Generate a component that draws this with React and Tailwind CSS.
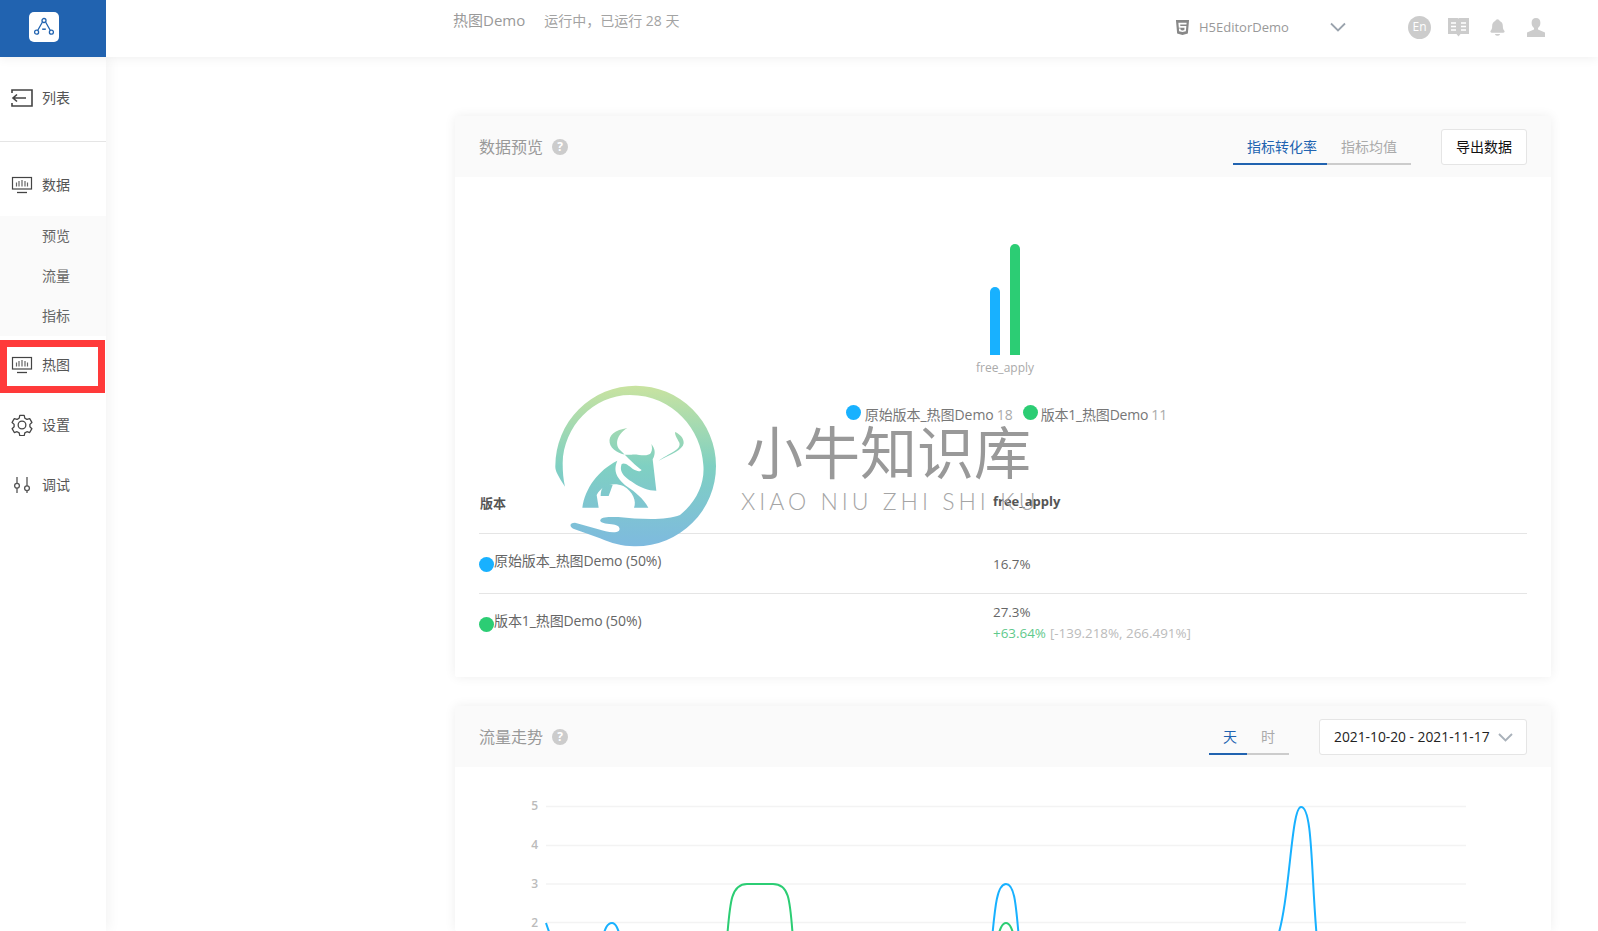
import React from "react";
import { SiHtml5 } from "react-icons/si";
import { IoNotifications } from "react-icons/io5";

const MonitorIcon = () => (
  <svg width="22" height="18" viewBox="0 0 22 18" fill="none" stroke="#444" strokeWidth="1.2">
    <rect x="1.500" y="1.500" width="19" height="11.500" />
    <path d="M11 4v6.500M8 5v5.500M14 5v5.500M5.500 6.500v4M16.500 6.500v4" stroke="#666" />
    <path d="M6 16.500h10" strokeWidth="1.300" />
  </svg>
);
const ListIcon = () => (
  <svg width="22" height="18" viewBox="0 0 22 18" fill="none" stroke="#444" strokeWidth="1.600">
    <path d="M1 4V1h20v16H1v-3" />
    <path d="M15 9H2M6 5.500L2 9l4 3.500" />
  </svg>
);
const GearIcon = () => (
  <svg width="22" height="22" viewBox="0 0 24 24" fill="none" stroke="#444" strokeWidth="1.400" strokeLinejoin="round">
    <path d="M9.600 1.600h4.800l.7 3 2.300 1.300 3-.9 2.400 4.200-2.200 2.100v2.600l2.200 2.100-2.400 4.200-3-.9-2.300 1.300-.7 3H9.600l-.7-3-2.300-1.300-3 .9-2.400-4.200 2.200-2.100v-2.600L1.200 9.200 3.600 5l3 .9 2.300-1.300z" />
    <circle cx="12" cy="12" r="4.200" />
  </svg>
);
const SliderIcon = () => (
  <svg width="18" height="18" viewBox="0 0 18 18" fill="none" stroke="#555" strokeWidth="1.300">
    <path d="M4 1v6.500M4 12v5M14 1v9M14 14.500V17" />
    <circle cx="4" cy="9.800" r="2.400" />
    <circle cx="14" cy="12.200" r="2.400" />
  </svg>
);

const NavItem = ({ icon, label, className = "" }) => (
  <div className={`flex items-center ${className}`}>
    <div className="flex w-[42px] justify-center pl-[2px]">
      <div className="flex w-[22px] justify-center">{icon}</div>
    </div>
    <span className="text-[14px] leading-[20px] text-[#555]">{label}</span>
  </div>
);
const SubItem = ({ label }) => (
  <div className="flex h-[40px] items-center pb-[2px] pl-[42px] text-[14px] text-[#666]">{label}</div>
);

const Help = () => (
  <span className="ml-[9px] flex h-[16px] w-[16px] items-center justify-center rounded-full bg-[#ccc] text-[12px] font-bold leading-none text-white">?</span>
);

const Tab = ({ label, active, last }) => (
  <div
    className={`-mb-[2px] flex h-[36px] items-center border-b-2 pl-[14px] text-[14px] ${last ? "pr-[14px]" : "pr-[10px]"} ${
      active ? "border-[#2163b0] text-[#2163b0]" : "border-[#ccc] text-[#aaa]"
    }`}
  >
    {label}
  </div>
);

const CardHeader = ({ title, children }) => (
  <div className="flex h-[61px] justify-between bg-[#fafafa] pl-[24px] pr-[24px] pt-[13px]">
    <div className="flex h-[36px] items-center text-[16px] text-[#999]">
      {title}
      <Help />
    </div>
    <div className="flex items-start">{children}</div>
  </div>
);

const Dot = ({ color, className = "" }) => (
  <span className={`inline-block h-[15px] w-[15px] shrink-0 rounded-full ${className}`} style={{ background: color }} />
);

const Logo = () => (
  <svg width="200" height="190" viewBox="0 0 600 570">
    <defs>
      <linearGradient id="lg" gradientUnits="userSpaceOnUse" x1="0" y1="47" x2="0" y2="530">
        <stop offset="0" stopColor="#c9e3a0" />
        <stop offset="0.5" stopColor="#7fd0c2" />
        <stop offset="1" stopColor="#7ebadf" />
      </linearGradient>
    </defs>
    <g fill="url(#lg)">
      <path d="M75 350C52 315 45 300 46 288A241 241 0 1 1 287 529C250 530 215 520 180 505L100 476C88 470 88 458 105 458L175 478C195 484 225 492 237 482C243 472 232 464 215 463C195 462 178 458 181 450C186 440 205 441 235 441C300 448 380 452 420 435C470 395 495 340 490 285C485 180 400 75 270 75C160 75 70 170 68 280C68 305 70 330 75 350Z" />
      <path d="M262 174C225 180 205 195 209 218C213 240 245 258 275 254C295 252 320 262 332 250C338 240 336 230 334 222C345 235 348 250 338 268L349 362C325 362 300 352 280 338C260 325 235 310 245 282C255 275 270 290 280 298C290 304 300 306 305 300C290 290 262 262 240 240C225 225 228 195 262 174Z" />
      <path d="M127 413C135 355 175 300 232 272C222 295 222 320 262 350C285 365 310 385 325 413H282C290 395 280 365 250 348C220 335 185 345 170 375L176 413Z" />
      <path d="M192 346C200 342 212 342 218 345L206 378H182C182 365 185 355 192 346Z" />
      <path d="M405 186C420 192 432 205 431 220C428 240 395 252 356 272C385 250 425 240 418 218C412 205 405 198 405 186Z" />
    </g>
  </svg>
);

export default function App() {
  return (
    <div
      className="relative h-[931px] w-[1598px] overflow-hidden bg-white"
      style={{ fontFamily: '"Open Sans", "Noto Sans CJK SC", sans-serif' }}
    >
      {/* top bar */}
      <div className="relative z-10 flex h-[57px] bg-white shadow-[0_2px_10px_rgba(0,0,0,0.06)]">
        <div className="w-[106px] bg-[#2163b0] pl-[29px] pt-[12px]">
          <div className="flex h-[30px] w-[30px] items-center justify-center rounded-[5px] bg-white">
            <svg width="20" height="20" viewBox="0 0 20 20" fill="none" stroke="#2163b0" strokeWidth="1.300">
              <path d="M8.300 5.200L3.800 13.300M11.700 5.200l4.500 8.100" />
              <circle cx="10" cy="3.500" r="2" />
              <circle cx="2.600" cy="15.200" r="2" />
              <circle cx="17.400" cy="15.200" r="2" />
              <path d="M8.200 12.200h3.600" strokeWidth="1.500" />
            </svg>
          </div>
        </div>
        <div className="relative flex flex-1">
          <div className="ml-[347px] flex h-[40px] items-center text-[14px] text-[#999]">
            <span className="text-[15px]">热图Demo</span>
            <span className="ml-[19px] text-[#a3a3a3]">运行中，已运行 28 天</span>
          </div>
          <div className="ml-auto flex h-[54px] items-center pr-[53px] text-[#aaa]">
            <SiHtml5 className="-ml-[1px] text-[15px] text-[#888]" />
            <span className="ml-[9px] w-[131px] pt-[1px] text-[13px] text-[#999]">H5EditorDemo</span>
            <svg width="16" height="10" viewBox="0 0 16 10" fill="none" stroke="#9aa3ad" strokeWidth="1.800">
              <path d="M1 1.500l7 7 7-7" />
            </svg>
            <span className="ml-[62px] flex h-[23px] w-[23px] items-center justify-center rounded-full bg-[#ccc] text-[12px] text-white">En</span>
            <svg className="ml-[17px]" width="21" height="19" viewBox="0 0 21 19">
              <path fill="#ccc" d="M0 0h9.500c.6 0 1 .3 1 .8 0-.5.4-.8 1-.8H21v16h-8.500l-2 2.500-2-2.500H0z" />
              <path stroke="#fff" strokeWidth="1.600" d="M3 5h5M3 8.500h5M13 5h5M13 8.500h5M3 12h5M13 12h5" />
            </svg>
            <IoNotifications className="ml-[19px] text-[19px] text-[#ccc]" />
            <svg className="ml-[20px]" width="18" height="19" viewBox="0 0 18 19">
              <path fill="#ccc" d="M9 0c2.800 0 4.400 2 4.400 4.800 0 2.400-1 4.200-2.400 5.200v1.500l7 3V19H0v-4.500l7-3V10C5.600 9 4.600 7.200 4.600 4.800 4.600 2 6.200 0 9 0z" />
            </svg>
          </div>
        </div>
      </div>

      <div className="flex h-[874px]">
        {/* sidebar */}
        <aside className="relative w-[106px] shrink-0 bg-white shadow-[3px_0_12px_rgba(0,0,0,0.05)]">
          <NavItem icon={<ListIcon />} label="列表" className="h-[84px] pb-[2px]" />
          <div className="h-px bg-[#e5e5e5]" />
          <NavItem icon={<MonitorIcon />} label="数据" className="h-[74px] pt-[11px]" />
          <div className="bg-[#fafafa]">
            <SubItem label="预览" />
            <SubItem label="流量" />
            <SubItem label="指标" />
          </div>
          <div className="mt-[4px] w-[105px] border-[7px] border-[#ff3a3a] bg-white">
            <NavItem icon={<MonitorIcon />} label="热图" className="-ml-[7px] h-[39px] pb-[3px]" />
          </div>
          <NavItem icon={<GearIcon />} label="设置" className="mt-[11px] h-[41px]" />
          <NavItem icon={<SliderIcon />} label="调试" className="mt-[19px] h-[41px]" />
        </aside>

        {/* main */}
        <main className="flex-1 pl-[349px] pr-[47px] pt-[59px]">
          <section className="h-[561px] rounded-[2px] bg-white shadow-[0_0_12px_rgba(0,0,0,0.07)]">
            <CardHeader title="数据预览">
              <div className="flex border-b-2 border-[#ccc]">
                <Tab label="指标转化率" active />
                <Tab label="指标均值" last />
              </div>
              <button className="ml-[30px] h-[36px] w-[86px] rounded-[3px] border border-[#e5e5e5] bg-white pb-[2px] text-[14px] text-[#111]">
                导出数据
              </button>
            </CardHeader>
            <div className="px-[24px]">
              <div className="flex flex-col items-center pl-[4px] pt-[67px]">
                <div className="flex h-[111px] items-end gap-[10px]">
                  <div className="h-[68px] w-[10px] rounded-t-[5px] bg-[#18b1ff]" />
                  <div className="h-[111px] w-[10px] rounded-t-[5px] bg-[#2ccd74]" />
                </div>
                <div className="mt-[5px] h-[16px] text-[12px] leading-[16px] text-[#aaa]">free_apply</div>
                <div className="mt-[28px] flex h-[20px] items-center pl-[3px] text-[14px] leading-[20px] text-[#777]">
                  <Dot color="#18b1ff" className="-mt-[3px] mr-[4px]" />
                  <span className="mt-[1px] tracking-[-0.05px]">原始版本_热图Demo</span>
                  <span className="ml-[3px] mt-[1px] text-[#aaa]">18</span>
                  <Dot color="#2ccd74" className="-mt-[3px] ml-[10px] mr-[3px]" />
                  <span className="mt-[1px] tracking-[-0.2px]">版本1_热图Demo</span>
                  <span className="ml-[3px] mt-[1px] text-[#aaa]">11</span>
                </div>
              </div>
              <div className="mt-[50px] flex h-[60px] items-center border-b border-[#e5e5e5] text-[13px] font-bold text-[#555]">
                <div className="w-[514px] pl-[1px]">版本</div>
                <div className="pb-[4px]">free_apply</div>
              </div>
              <div className="flex h-[60px] items-center border-b border-[#e5e5e5] text-[14px] text-[#666]">
                <div className="flex w-[514px] items-center">
                  <Dot color="#18b1ff" className="mt-[2px]" />
                  <span className="-mt-[6px] tracking-[-0.1px]">原始版本_热图Demo (50%)</span>
                </div>
                <div className="pt-[1px] text-[13.4px]">16.7%</div>
              </div>
              <div className="flex h-[60px] items-center text-[14px] text-[#666]">
                <div className="flex w-[514px] items-center">
                  <Dot color="#2ccd74" className="mt-[0px]" />
                  <span className="-mt-[8px] tracking-[-0.1px]">版本1_热图Demo (50%)</span>
                </div>
                <div className="-mt-[2px] text-[13.4px] leading-[21px]">
                  <div>27.3%</div>
                  <div>
                    <span className="text-[#5fc98c]">+63.64%</span>
                    <span className="ml-[4px] text-[#bbb]">[-139.218%, 266.491%]</span>
                  </div>
                </div>
              </div>
            </div>
          </section>

          <section className="mt-[29px] rounded-[2px] bg-white shadow-[0_0_12px_rgba(0,0,0,0.07)]">
            <CardHeader title="流量走势">
              <div className="flex border-b-2 border-[#ccc]">
                <Tab label="天" active />
                <Tab label="时" last />
              </div>
              <div className="ml-[30px] flex h-[36px] w-[208px] items-center justify-between rounded-[3px] border border-[#e5e5e5] bg-white pl-[14px] pr-[13px] text-[13.8px] text-[#222]">
                <span>2021-10-20 - 2021-11-17</span>
                <svg width="15" height="9" viewBox="0 0 15 9" fill="none" stroke="#a9b1ba" strokeWidth="1.900">
                  <path d="M1 1l6.500 6.500L14 1" />
                </svg>
              </div>
            </CardHeader>
            <svg width="1096" height="164" viewBox="0 0 1096 164" fill="none" className="block">
              <g stroke="#f3f3f3" strokeWidth="1.500">
                <path d="M91 39.500H1011M91 78.500H1011M91 117H1011M91 155.500H1011" />
              </g>
              <g fill="#bbb" fontSize="12" fontWeight="600" textAnchor="end">
                <text x="83" y="43">5</text>
                <text x="83" y="82">4</text>
                <text x="83" y="121">3</text>
                <text x="83" y="160">2</text>
              </g>
              <g stroke="#18b1ff" strokeWidth="2">
                <path d="M91 156C93 162 95 168 97 172" />
                <path d="M147 172C150 162 152 156 157 156C161 156 163 162 166 172" />
                <path d="M537 172C540 140 542 117 551 117C560 117 561 140 564 172" />
                <path d="M822 172C835 135 836 40 846 40C858 40 856 110 862 172" />
              </g>
              <g stroke="#2ccd74" strokeWidth="2">
                <path d="M272 172C275 135 276 117 292 117H318C335 117 335 135 338 172" />
                <path d="M542 172C545 162 547 156 551 156C555 156 557 162 560 172" />
              </g>
            </svg>
          </section>
        </main>
      </div>

      {/* watermark */}
      <div className="pointer-events-none absolute left-[540px] top-[370px] z-20 flex">
        <Logo />
      </div>
      <div className="pointer-events-none absolute left-[746px] top-[409px] z-20">
        <div className="text-[57px] leading-[80px] text-[#999]" style={{ fontFamily: '"Noto Sans CJK SC", sans-serif' }}>
          小牛知识库
        </div>
        <div
          className="-ml-[5px] -mt-[1px] whitespace-nowrap text-[23px] font-light leading-[26px] tracking-[4px] text-[#a5a5a5]"
          style={{ fontFamily: '"Lato", sans-serif' }}
        >
          XIAO NIU ZHI SHI KU
        </div>
      </div>
    </div>
  );
}
